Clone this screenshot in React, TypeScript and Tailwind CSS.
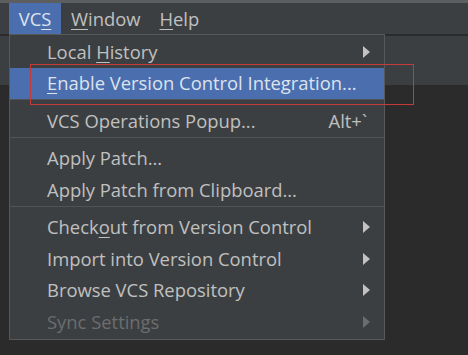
import React from 'react'

type Item =
  | { kind: 'sep' }
  | { kind: 'item'; label: React.ReactNode; shortcut?: string; sub?: boolean; active?: boolean; disabled?: boolean }

function U({ children }: { children: React.ReactNode }) {
  return <span className="underline decoration-1 underline-offset-[3px]">{children}</span>
}

const items: Item[] = [
  { kind: 'item', label: <>Local <U>H</U>istory</>, sub: true },
  { kind: 'item', label: <><U>E</U>nable Version Control Integration...</>, active: true },
  { kind: 'sep' },
  { kind: 'item', label: 'VCS Operations Popup...', shortcut: 'Alt+`' },
  { kind: 'sep' },
  { kind: 'item', label: 'Apply Patch...' },
  { kind: 'item', label: 'Apply Patch from Clipboard...' },
  { kind: 'sep' },
  { kind: 'item', label: <>Check<U>o</U>ut from Version Control</>, sub: true },
  { kind: 'item', label: 'Import into Version Control', sub: true },
  { kind: 'item', label: 'Browse VCS Repository', sub: true },
  { kind: 'item', label: 'Sync Settings', sub: true, disabled: true },
]

function Arrow({ dim }: { dim?: boolean }) {
  return (
    <svg width="7" height="12" viewBox="0 0 7 12" className="shrink-0">
      <polygon points="0,0 7,6 0,12" fill={dim ? '#6a6c6e' : '#c2c2c2'} />
    </svg>
  )
}

export default function App() {
  return (
    <div
      className="relative w-[468px] h-[355px] overflow-hidden bg-[#2b2b2c] text-[18.4px] text-[#c0c0c0]"
      style={{ fontFamily: '"Open Sans", Lato, sans-serif' }}
    >
      <div className="h-[3px] bg-[#5c5e60]" />
      <div className="h-[31px] flex items-stretch bg-[#3c3f41] pl-[9px]">
        <div className="w-[52px] flex items-center justify-center bg-[#4b6eaf] text-[#dde3ee]">
          VC<U>S</U>
        </div>
        <div className="flex items-center pl-[10px] pr-[9px]">
          <U>W</U>indow
        </div>
        <div className="flex items-center px-[10px]">
          <U>H</U>elp
        </div>
      </div>
      <div className="h-[2px] bg-[#2b2b2b]" />
      <div className="h-[49px] bg-[#3c3f41]" />

      <div className="absolute left-[9px] top-[34px] w-[376px] border border-[#565859] bg-[#3c3f41] pt-[1px] pb-[1px]">
        {items.map((it, i) =>
          it.kind === 'sep' ? (
            <div key={i} className="h-[6px] border-t border-[#505254]" />
          ) : (
            <div
              key={i}
              className={`h-[31.5px] flex items-center pl-[37px] pr-[14px] ${
                it.active ? 'bg-[#4b6eaf] text-[#dde3ee]' : ''
              } ${it.disabled ? 'text-[#6b6d6f]' : ''}`}
            >
              <span className="flex-1 whitespace-nowrap">{it.label}</span>
              {it.shortcut && <span className="mr-[3px]">{it.shortcut}</span>}
              {it.sub && <Arrow dim={it.disabled} />}
            </div>
          )
        )}
      </div>

      <div className="absolute left-[30px] top-[64px] w-[384px] h-[41px] border-[1.5px] border-[#c43b3b]" />
    </div>
  )
}
